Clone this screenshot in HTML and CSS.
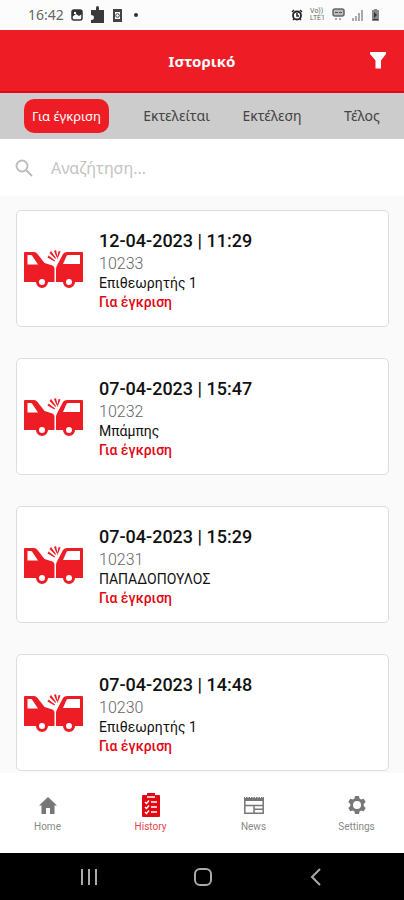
FILE: index.html
```html
<!DOCTYPE html>
<html lang="el">
<head>
<meta charset="utf-8">
<meta name="viewport" content="width=device-width, initial-scale=1">
<title>Ιστορικό</title>
<link rel="stylesheet" href="styles.css">
</head>
<body>
<svg class="defs" aria-hidden="true">
  <symbol id="crash" viewBox="0 0 60 38">
    <path fill="#ee1c25" fill-rule="evenodd" d="M1 2h9q2 0 3.500 2l7 9 8 2.500q2 1 2 3V32H0V3q0-1 1-1zM3.500 5v9.500H14Q11 10 8 5.500L7 5zM58 2q1 0 1 1v29H32V19q0-2 1-3.500L39 4q1.500-2 4-2zM44 5q-1 0-1.500 1L39 14h17V5z"/>
    <circle cx="18" cy="32" r="4.500" fill="#fff" stroke="#ee1c25" stroke-width="3"/>
    <circle cx="45" cy="32" r="4.500" fill="#fff" stroke="#ee1c25" stroke-width="3"/>
    <path fill="#ee1c25" d="M25.500 3l1.500-2 5 7-.5 1zM30 1l2-1 1.500 7h-1zM34.500 1l2 .5-3 7.500h-.5zM23.500 7.500l1-2 6.500 5-.5 1z"/>
  </symbol>
</svg>
<div class="app">
  <div class="status">
    <span class="time">16:42</span>
    <svg width="12" height="12" viewBox="0 0 12 12"><rect x="1" y="1" width="10" height="10" rx="2" fill="none" stroke="#333" stroke-width="1.500"/><path fill="#333" d="M1 1h10v4L8 7 5 5 1 8z"/><path fill="#fff" d="M3 3h2v2H3z"/></svg>
    <svg width="15" height="18" viewBox="0 0 15 18"><path fill="#3a3a3a" d="M1 4h5V2q0-2 1.500-2T9 2v2h5v13H1v-3q3 0 3-2.500T1 9z"/></svg>
    <svg width="11" height="13" viewBox="0 0 11 13"><path fill="#444" fill-rule="evenodd" d="M1 0h9v13H1zM3 3v7h5V3z"/><circle cx="5.500" cy="6.500" r="1.800" fill="none" stroke="#444"/></svg>
    <svg class="dot" width="4" height="4" viewBox="0 0 4 4"><circle cx="2" cy="2" r="2" fill="#333"/></svg>
    <span class="spacer"></span>
    <svg width="12" height="12" viewBox="0 0 12 12"><circle cx="6" cy="6.500" r="4" fill="none" stroke="#222" stroke-width="1.800"/><path stroke="#222" stroke-width="1.500" d="M1 3l2-2M11 3L9 1M2 11l1-1M10 11l-1-1M6 4v3h2" fill="none"/></svg>
    <span class="lte"><span>Vo))</span><span>LTE1</span></span>
    <svg width="13" height="14" viewBox="0 0 13 14"><rect x="1" y="1" width="11" height="7" rx="2" fill="#bbb" stroke="#666" stroke-width="1.500"/><path stroke="#555" d="M3 4.500h3M7 4.500h3M4 10v2M8 10v2"/></svg>
    <svg width="12" height="12" viewBox="0 0 12 12"><path fill="#aaa" d="M0 9h2v3H0zM3 7h2v5H3zM6 4h2v8H6zM9 1h2v11H9z"/></svg>
    <svg width="9" height="12" viewBox="0 0 9 12"><path fill="#888" d="M3 0h3v1h2v11H1V1h2z"/><path fill="#333" d="M3 3l3 3-3 3zM2 10h5v1H2z"/></svg>
  </div>
  <header class="header">
    <h1>Ιστορικό</h1>
    <button class="filter" aria-label="Φίλτρο"><svg width="16" height="17" viewBox="0 0 16 17"><path fill="#fff" d="M0 0h16v2l-5 6.500V16.500H5.500v-8L0 2z"/></svg></button>
  </header>
  <nav class="tabs">
    <button class="tab active">Για έγκριση</button>
    <button class="tab">Εκτελείται</button>
    <button class="tab">Εκτέλεση</button>
    <button class="tab">Τέλος</button>
  </nav>
  <div class="search">
    <svg width="18" height="18" viewBox="0 0 18 18"><circle cx="7" cy="7" r="5.500" fill="none" stroke="#bbb" stroke-width="1.800"/><path stroke="#bbb" stroke-width="2" d="M11 11l6 6"/></svg>
    <input type="text" placeholder="Αναζήτηση..." aria-label="Αναζήτηση">
  </div>
  <main class="list">
    <article class="card"><svg class="crash" aria-hidden="true"><use href="#crash"/></svg><div class="info"><h2>12-04-2023 | 11:29</h2><p class="num">10233</p><p class="name">Επιθεωρητής 1</p><p class="state">Για έγκριση</p></div></article>
    <article class="card"><svg class="crash" aria-hidden="true"><use href="#crash"/></svg><div class="info"><h2>07-04-2023 | 15:47</h2><p class="num">10232</p><p class="name">Μπάμπης</p><p class="state">Για έγκριση</p></div></article>
    <article class="card"><svg class="crash" aria-hidden="true"><use href="#crash"/></svg><div class="info"><h2>07-04-2023 | 15:29</h2><p class="num">10231</p><p class="name">ΠΑΠΑΔΟΠΟΥΛΟΣ</p><p class="state">Για έγκριση</p></div></article>
    <article class="card"><svg class="crash" aria-hidden="true"><use href="#crash"/></svg><div class="info"><h2>07-04-2023 | 14:48</h2><p class="num">10230</p><p class="name">Επιθεωρητής 1</p><p class="state">Για έγκριση</p></div></article>
  </main>
  <nav class="bottom">
    <a href="#home"><svg width="18" height="24" viewBox="0 0 18 24"><path fill="#777" d="M9 4l9 8.500h-2.500V21h-4.500v-6H7v6H2.500v-8.500H0z"/></svg>Home</a>
    <a href="#history" class="current"><svg width="20" height="24" viewBox="0 0 20 24"><path fill="#e30613" d="M2 2h4V0h8v2h4q1 0 1 1v20q0 1-1 1H2q-1 0-1-1V3q0-1 1-1z"/><path fill="none" stroke="#fff" stroke-width="1.500" d="M6 4h8M4 9l1.500 1.500L8 7.500M10 9h6M4 14l1.500 1.500L8 12.500M10 14h6M4 19l1.500 1.500L8 17.500M10 19h6"/></svg>History</a>
    <a href="#news"><svg width="22" height="24" viewBox="0 0 22 24"><path fill="#777" d="M1 4h20v4H1z"/><path fill="none" stroke="#777" stroke-width="1.500" d="M1.800 4v16.200h18.400V4M2 12.500h18M11 12.500V20M11 16.300h9"/><path stroke="#fff" stroke-dasharray="1 1.500" d="M2 4.500h18"/></svg>News</a>
    <a href="#settings"><svg width="20" height="24" viewBox="0 0 20 24"><path fill="#777" fill-rule="evenodd" d="M8 3h4l.5 2.600 1.700 1 2.500-.9 2 3.400-2 1.800v2.200l2 1.800-2 3.400-2.500-.9-1.700 1L12 21H8l-.5-2.600-1.700-1-2.500.9-2-3.400 2-1.800v-2.200l-2-1.800 2-3.400 2.500.9 1.700-1zM10 8a4 4 0 1 0 0 8 4 4 0 0 0 0-8z"/></svg>Settings</a>
  </nav>
  <div class="system">
    <button aria-label="Πρόσφατα"><svg width="18" height="18" viewBox="0 0 18 18"><path stroke="#aaa" stroke-width="2" d="M2 1v16M9 1v16M16 1v16"/></svg></button>
    <button aria-label="Αρχική"><svg width="20" height="20" viewBox="0 0 20 20"><rect x="2" y="2" width="16" height="16" rx="5" fill="none" stroke="#aaa" stroke-width="2"/></svg></button>
    <button aria-label="Πίσω"><svg width="18" height="18" viewBox="0 0 18 18"><path fill="none" stroke="#aaa" stroke-width="2" d="M13 1L5 9l8 8"/></svg></button>
  </div>
</div>
</body>
</html>
```
FILE: styles.css
```css
* { box-sizing: border-box; }
body { margin: 0; font-family: Roboto, "Noto Sans", sans-serif; color: #111; background: #fafafa; overflow-x: hidden; }
h1, h2, p { margin: 0; }
button { border: 0; background: none; padding: 0; font: inherit; color: inherit; }
svg { display: block; flex: none; }
.defs { display: none; }
.app { display: flex; flex-direction: column; height: 100vh; }

.status { display: flex; align-items: center; gap: 7px; height: 30px; padding: 0 24px 0 28px; background: #fcfcfc; flex: none; }
.time { font: 14px/20px "Noto Sans", sans-serif; color: #666; }
.dot { margin-left: 4px; }
.spacer { flex: 1; }
.lte { display: flex; flex-direction: column; font-size: 7px; line-height: 7px; color: #666; }

.header { display: grid; grid-template-columns: 1fr auto 1fr; align-items: center; height: 63px; padding: 0 18px; background: #ee1c25; border-bottom: 2px solid #e30613; color: #fff; flex: none; }
.header h1 { grid-column: 2; font: bold 15px/20px "Noto Sans", sans-serif; }
.filter { justify-self: end; }

.tabs { display: grid; grid-template-columns: 125fr 95fr 96fr 84fr; align-items: center; justify-items: center; height: 46px; padding-left: 4px; background: #ccc; flex: none; }
.tab { height: 34px; padding: 0 8px; border-radius: 10px; font: 14px/20px "Noto Sans", sans-serif; color: #444; white-space: nowrap; }
.tab.active { background: #ee1c25; color: #fff; font-size: 13px; }

.search { display: flex; align-items: center; gap: 18px; height: 57px; padding: 0 15px; background: #fff; flex: none; }
.search input { flex: 1; min-width: 0; border: 0; outline: 0; padding: 0; background: none; font: 16px/20px "Noto Sans", sans-serif; }
.search input::placeholder { color: #c4c4c4; opacity: 1; }

.list { display: flex; flex-direction: column; gap: 31px; flex: 1; min-height: 0; overflow: hidden; padding: 14px 15px 0 16px; }
.card { display: flex; align-items: center; gap: 15px; flex: none; height: 117px; padding: 0 7px; border: 1px solid #ddd; border-radius: 5px; background: #fff; }
.info { padding-top: 3px; }
.crash { width: 60px; height: 38px; }
.card h2 { font-size: 18px; line-height: 26px; font-weight: 500; }
.num { font-size: 16px; line-height: 20px; font-weight: 300; color: #666; }
.name { font-size: 14px; line-height: 19px; }
.state { font-size: 14px; line-height: 19px; font-weight: 500; color: #e30613; }

.bottom { display: grid; grid-template-columns: repeat(4, 1fr); height: 80px; background: #fff; margin: 0 -4px; flex: none; }
.bottom a { display: flex; flex-direction: column; align-items: center; gap: 4px; padding-top: 20px; font-size: 10px; line-height: 12px; color: #888; text-decoration: none; }
.bottom a.current { color: #e34450; }

.system { display: flex; align-items: center; justify-content: space-between; height: 47px; padding: 0 79px 0 80px; background: #000; flex: none; }
```
